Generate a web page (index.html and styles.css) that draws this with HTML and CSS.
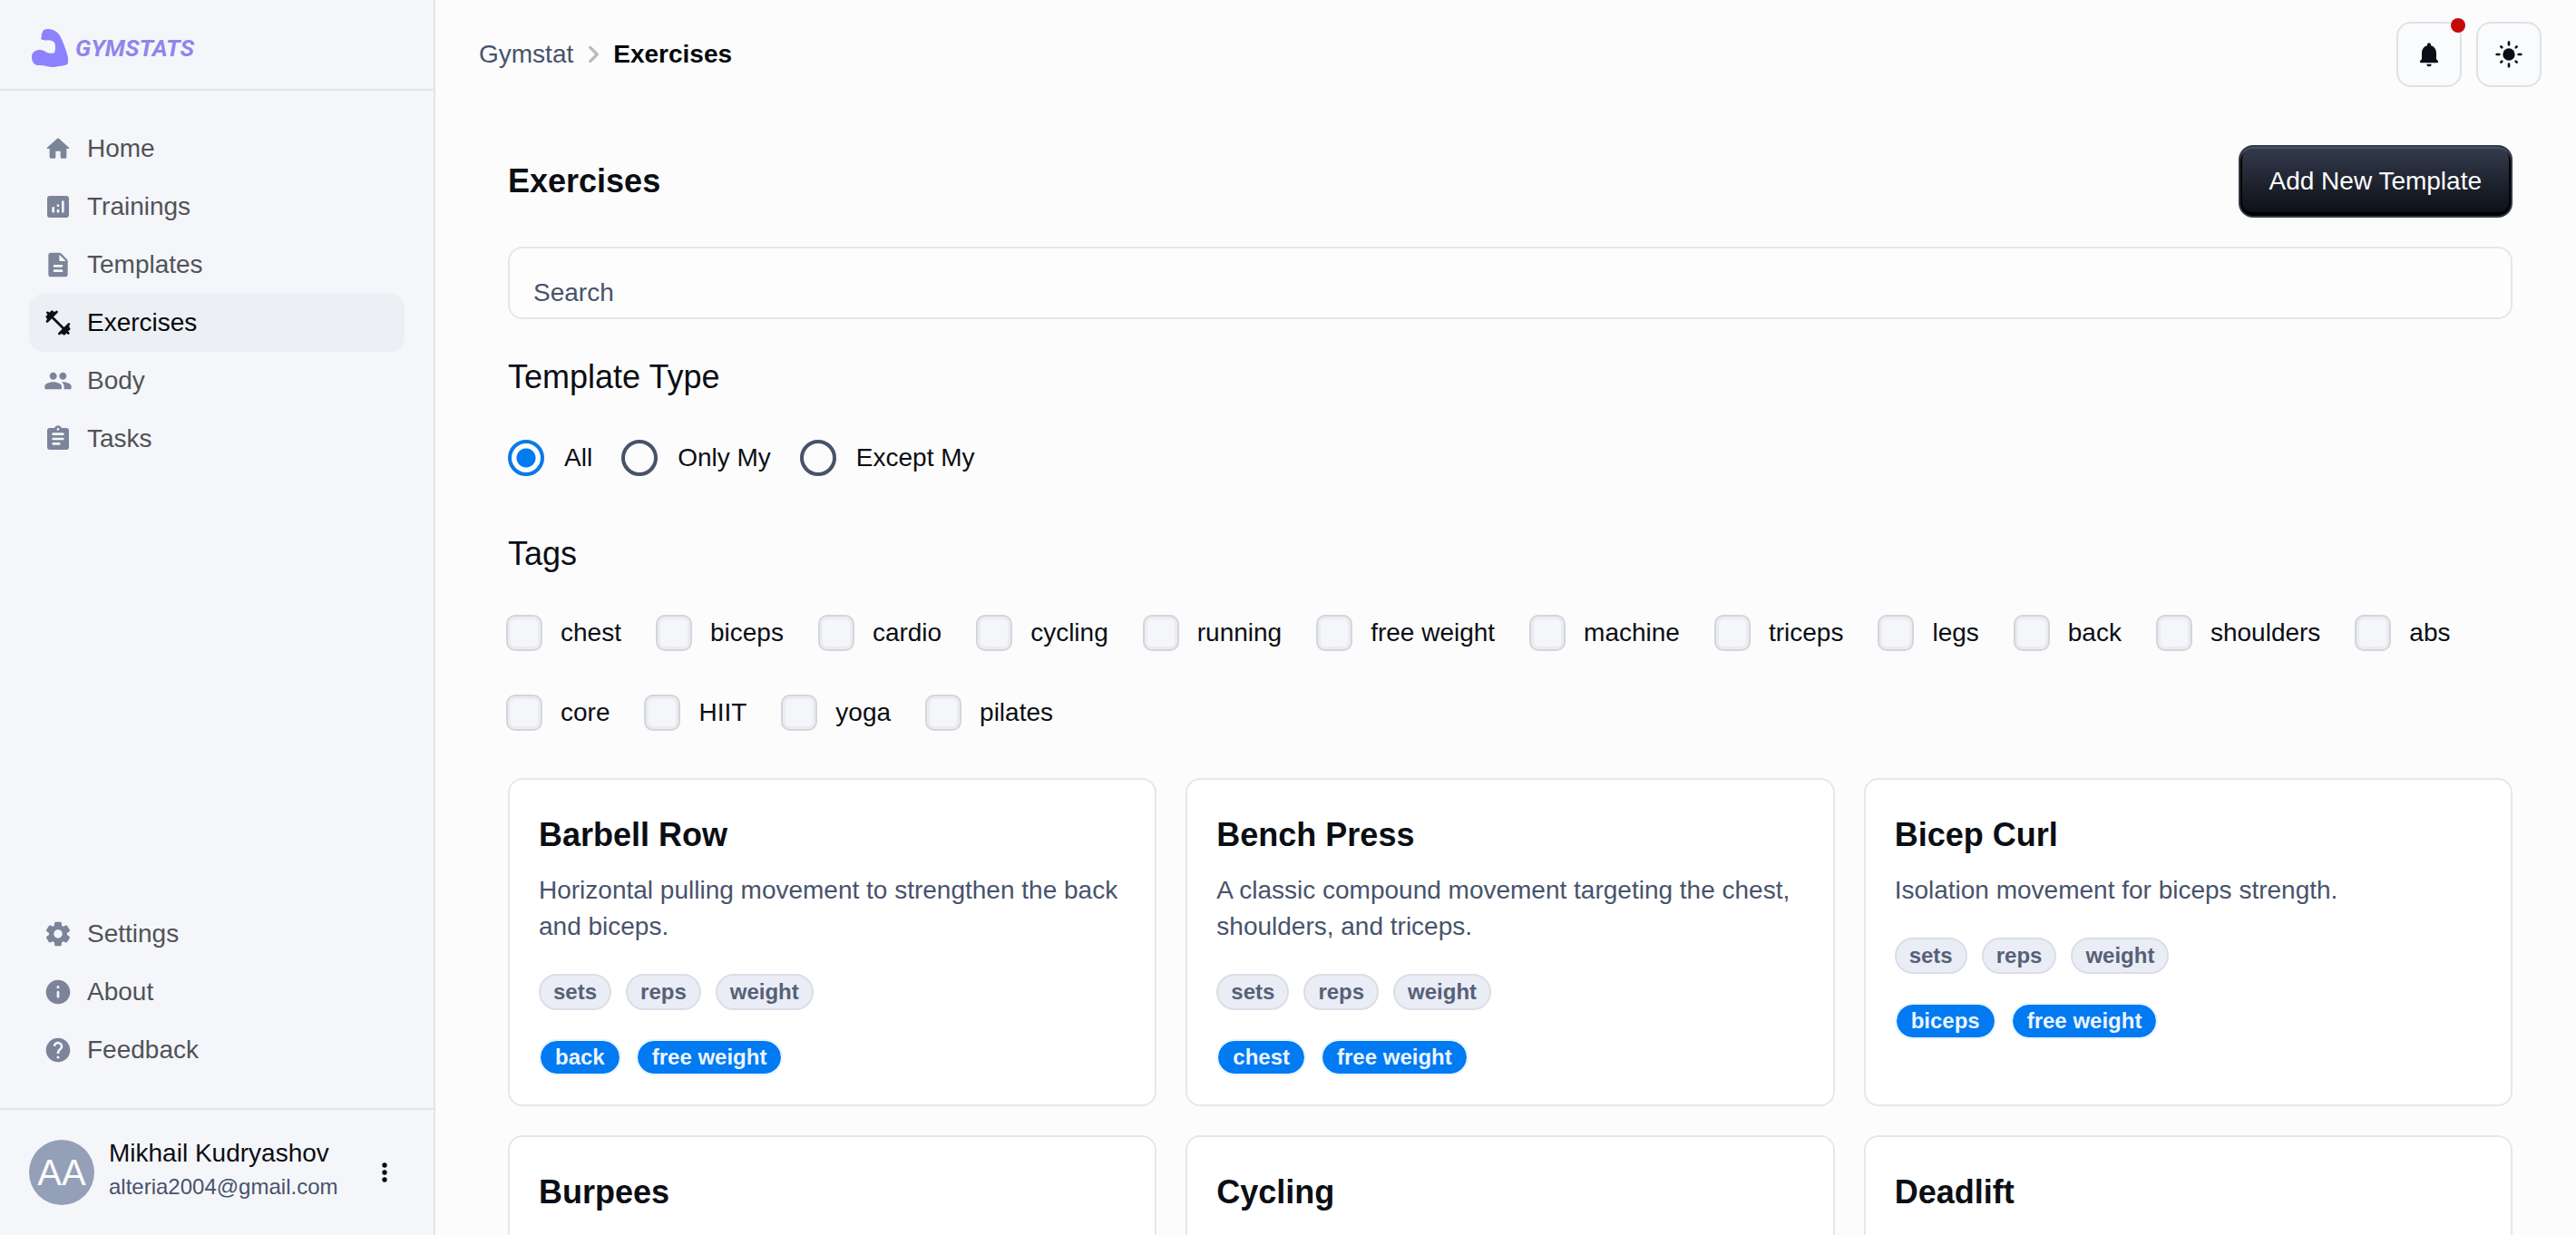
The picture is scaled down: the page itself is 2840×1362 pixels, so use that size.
FILE: index.html
```html
<!DOCTYPE html>
<html lang="en">
<head>
<meta charset="utf-8">
<title>Gymstat - Exercises</title>
<link rel="stylesheet" href="styles.css">
</head>
<body>
<div class="app">
  <aside class="sidebar">
    <a class="brand" href="#">
      <svg class="brand-mark" viewBox="0 0 120 126" aria-hidden="true"><path d="M52 0C42 0 36 5 35 12C31 17 31 23 34 25C28 29 31 37 38 36C46 40 50 35 56 37C64 38 72 40 76 47C79 56 79 68 75 79C67 82 56 80 49 77C41 70 33 68 24 69C8 71 0 80 0 92C0 107 7 118 20 120C36 121 44 121 52 124C64 127 78 126 90 123C100 122 112 120 118 116C122 110 121 98 117 84C112 65 104 43 93 22C85 8 70 0 52 0Z"/></svg>
      <span class="brand-name">GYMSTATS</span>
    </a>
    <nav class="nav">
      <div class="nav-group">
        <a class="nav-item" href="#"><svg class="icon" viewBox="0 0 24 24"><path d="M10 19v-5h4v5c0 .55.45 1 1 1h3c.55 0 1-.45 1-1v-7h1.7c.46 0 .68-.57.33-.87L12.67 3.6c-.38-.34-.96-.34-1.34 0l-8.36 7.53c-.34.3-.13.87.33.87H5v7c0 .55.45 1 1 1h3c.55 0 1-.45 1-1z"/></svg>Home</a>
        <a class="nav-item" href="#"><svg class="icon" viewBox="0 0 24 24"><path d="M19 3H5c-1.100 0-2 .9-2 2v14c0 1.100.9 2 2 2h14c1.100 0 2-.9 2-2V5c0-1.100-.9-2-2-2zM8 17c-.55 0-1-.45-1-1v-3c0-.55.45-1 1-1s1 .45 1 1v3c0 .55-.45 1-1 1zm4 0c-.55 0-1-.45-1-1v-1c0-.55.45-1 1-1s1 .45 1 1v1c0 .55-.45 1-1 1zm0-5c-.55 0-1-.45-1-1s.45-1 1-1 1 .45 1 1-.45 1-1 1zm4 5c-.55 0-1-.45-1-1V8c0-.55.45-1 1-1s1 .45 1 1v8c0 .55-.45 1-1 1z"/></svg>Trainings</a>
        <a class="nav-item" href="#"><svg class="icon" viewBox="0 0 24 24"><path d="M14.590 2.590c-.38-.38-.89-.59-1.420-.59H6c-1.100 0-2 .9-2 2v16c0 1.100.89 2 1.990 2H18c1.100 0 2-.9 2-2V8.830c0-.53-.21-1.040-.59-1.410l-4.820-4.830zM15 18H9c-.55 0-1-.45-1-1s.45-1 1-1h6c.55 0 1 .45 1 1s-.45 1-1 1zm0-4H9c-.55 0-1-.45-1-1s.45-1 1-1h6c.55 0 1 .45 1 1s-.45 1-1 1zm-2-6V3.500L18.500 9H14c-.55 0-1-.45-1-1z"/></svg>Templates</a>
        <a class="nav-item active" href="#" aria-current="page"><svg class="icon line" viewBox="0 0 24 24"><path d="M3.300 3.600L20.500 20.600M2.800 7L7 2.800M3.600 8.600L8.600 3.600M3 10.900L10.900 3M13 21L21 13M15.300 20.500L20.500 15.300M17 21.200L21.200 17"/></svg>Exercises</a>
        <a class="nav-item" href="#"><svg class="icon" viewBox="0 0 24 24"><path d="M16 11c1.660 0 2.990-1.340 2.990-3S17.660 5 16 5s-3 1.340-3 3 1.340 3 3 3zm-8 0c1.660 0 2.990-1.340 2.990-3S9.660 5 8 5 5 6.340 5 8s1.340 3 3 3zm0 2c-2.330 0-7 1.170-7 3.500V18c0 .55.45 1 1 1h12c.55 0 1-.45 1-1v-1.500c0-2.330-4.670-3.500-7-3.500zm8 0c-.29 0-.62.02-.97.05.02.01.03.03.04.04 1.140.83 1.930 1.940 1.930 3.410V18c0 .35-.07.69-.18 1H22c.55 0 1-.45 1-1v-1.500c0-2.330-4.670-3.500-7-3.500z"/></svg>Body</a>
        <a class="nav-item" href="#"><svg class="icon" viewBox="0 0 24 24"><path d="M19 3h-4.180C14.400 1.840 13.300 1 12 1s-2.400.84-2.820 2H5c-1.100 0-2 .9-2 2v14c0 1.100.9 2 2 2h14c1.100 0 2-.9 2-2V5c0-1.100-.9-2-2-2zm-7 0c.55 0 1 .45 1 1s-.45 1-1 1-1-.45-1-1 .45-1 1-1zm1 14H8c-.55 0-1-.45-1-1s.45-1 1-1h5c.55 0 1 .45 1 1s-.45 1-1 1zm3-4H8c-.55 0-1-.45-1-1s.45-1 1-1h8c.55 0 1 .45 1 1s-.45 1-1 1zm0-4H8c-.55 0-1-.45-1-1s.45-1 1-1h8c.55 0 1 .45 1 1s-.45 1-1 1z"/></svg>Tasks</a>
      </div>
      <div class="nav-group">
        <a class="nav-item" href="#"><svg class="icon" viewBox="0 0 24 24"><path d="M19.500 12c0-.23-.01-.45-.03-.68l1.860-1.410c.4-.3.51-.86.26-1.300l-1.870-3.230c-.25-.44-.79-.62-1.250-.42l-2.150.91c-.37-.26-.76-.49-1.170-.68l-.29-2.310c-.06-.5-.49-.88-.99-.88h-3.730c-.51 0-.94.38-1 .88l-.29 2.310c-.41.19-.8.42-1.170.68l-2.150-.91c-.46-.2-1-.02-1.250.42L2.410 8.620c-.25.44-.14.99.26 1.300l1.860 1.410c-.02.22-.03.44-.03.67s.01.45.03.68l-1.860 1.410c-.4.3-.51.86-.26 1.300l1.870 3.230c.25.44.79.62 1.250.42l2.150-.91c.37.26.76.49 1.170.68l.29 2.310c.06.5.49.88.99.88h3.730c.5 0 .93-.38.99-.88l.29-2.310c.41-.19.8-.42 1.170-.68l2.150.91c.46.2 1 .02 1.250-.42l1.870-3.230c.25-.44.14-.99-.26-1.300l-1.860-1.410c.03-.23.04-.45.04-.68zm-7.460 3.500c-1.930 0-3.500-1.570-3.500-3.500s1.570-3.500 3.500-3.500 3.500 1.570 3.500 3.500-1.570 3.500-3.500 3.500z"/></svg>Settings</a>
        <a class="nav-item" href="#"><svg class="icon" viewBox="0 0 24 24"><path d="M12 2C6.480 2 2 6.480 2 12s4.480 10 10 10 10-4.480 10-10S17.520 2 12 2zm0 15c-.55 0-1-.45-1-1v-4c0-.55.45-1 1-1s1 .45 1 1v4c0 .55-.45 1-1 1zm1-8h-2V7h2v2z"/></svg>About</a>
        <a class="nav-item" href="#"><svg class="icon" viewBox="0 0 24 24"><path d="M12 2C6.480 2 2 6.480 2 12s4.480 10 10 10 10-4.480 10-10S17.520 2 12 2zm1 17h-2v-2h2v2zm2.070-7.750l-.9.92c-.5.51-.86.97-1.040 1.690-.08.32-.13.68-.13 1.140h-2v-.5c0-.46.08-.9.22-1.310.2-.58.53-1.100.95-1.520l1.240-1.260c.46-.44.68-1.100.55-1.800-.13-.72-.69-1.330-1.390-1.530-1.110-.31-2.140.32-2.470 1.270-.12.37-.43.65-.82.65h-.3C8.400 9 8 8.440 8.160 7.880c.43-1.470 1.680-2.590 3.230-2.830 1.520-.24 2.970.55 3.870 1.800 1.180 1.630.83 3.380-.19 4.400z"/></svg>Feedback</a>
      </div>
    </nav>
    <div class="user">
      <span class="avatar">AA</span>
      <div class="user-info">
        <div class="user-name">Mikhail Kudryashov</div>
        <div class="user-mail">alteria2004@gmail.com</div>
      </div>
      <button class="user-menu" type="button" aria-label="Account menu"><svg class="icon" viewBox="0 0 24 24"><circle cx="12" cy="6" r="2"/><circle cx="12" cy="12" r="2"/><circle cx="12" cy="18" r="2"/></svg></button>
    </div>
  </aside>

  <main class="main">
    <header class="topbar">
      <nav class="crumbs" aria-label="Breadcrumb">
        <a class="crumb" href="#">Gymstat</a>
        <svg class="crumb-sep" viewBox="0 0 24 24"><path d="M9.310 6.710c-.39.39-.39 1.020 0 1.410L13.190 12l-3.880 3.880c-.39.39-.39 1.020 0 1.410.39.39 1.020.39 1.410 0l4.590-4.590c.39-.39.39-1.020 0-1.410L10.720 6.700c-.38-.38-1.020-.38-1.410.01z"/></svg>
        <span class="crumb current">Exercises</span>
      </nav>
      <div class="actions">
        <button class="icon-button" type="button" aria-label="Notifications"><svg class="icon" viewBox="0 0 24 24"><path d="M12 22c1.100 0 2-.9 2-2h-4c0 1.100.89 2 2 2zm6-6v-5c0-3.070-1.640-5.640-4.500-6.320V4c0-.83-.67-1.500-1.500-1.500s-1.500.67-1.500 1.500v.68C7.630 5.360 6 7.920 6 11v5l-1.290 1.290c-.63.63-.19 1.710.7 1.710h13.170c.89 0 1.340-1.080.71-1.710L18 16z"/></svg><span class="dot"></span></button>
        <button class="icon-button" type="button" aria-label="Colour mode"><svg class="icon sun" viewBox="0 0 24 24"><circle cx="12" cy="12" r="5"/><path d="M12 2v2M12 20v2M2 12h2M20 12h2M5.500 5.500l.7.7M17.800 17.800l.7.7M5.500 18.500l.7-.7M17.800 6.200l.7-.7"/></svg></button>
      </div>
    </header>

    <div class="content">
      <div class="page-head">
        <h1 class="heading bold">Exercises</h1>
        <button class="primary" type="button">Add New Template</button>
      </div>
      <input class="search" type="search" placeholder="Search" aria-label="Search">

      <section class="filter" aria-labelledby="type-title">
        <h2 class="heading" id="type-title">Template Type</h2>
        <div class="radios">
          <label class="option"><input class="radio" type="radio" name="type" checked>All</label>
          <label class="option"><input class="radio" type="radio" name="type">Only My</label>
          <label class="option"><input class="radio" type="radio" name="type">Except My</label>
        </div>
      </section>

      <section class="filter" aria-labelledby="tags-title">
        <h2 class="heading" id="tags-title">Tags</h2>
        <div class="checks">
          <label class="option"><input class="check" type="checkbox">chest</label>
          <label class="option"><input class="check" type="checkbox">biceps</label>
          <label class="option"><input class="check" type="checkbox">cardio</label>
          <label class="option"><input class="check" type="checkbox">cycling</label>
          <label class="option"><input class="check" type="checkbox">running</label>
          <label class="option"><input class="check" type="checkbox">free weight</label>
          <label class="option"><input class="check" type="checkbox">machine</label>
          <label class="option"><input class="check" type="checkbox">triceps</label>
          <label class="option"><input class="check" type="checkbox">legs</label>
          <label class="option"><input class="check" type="checkbox">back</label>
          <label class="option"><input class="check" type="checkbox">shoulders</label>
          <label class="option"><input class="check" type="checkbox">abs</label>
          <label class="option"><input class="check" type="checkbox">core</label>
          <label class="option"><input class="check" type="checkbox">HIIT</label>
          <label class="option"><input class="check" type="checkbox">yoga</label>
          <label class="option"><input class="check" type="checkbox">pilates</label>
        </div>
      </section>

      <div class="cards">
        <article class="card">
          <h3 class="card-title">Barbell Row</h3>
          <p class="card-text">Horizontal pulling movement to strengthen the back and biceps.</p>
          <div class="chips"><span class="chip">sets</span><span class="chip">reps</span><span class="chip">weight</span></div>
          <div class="chips"><span class="chip tag">back</span><span class="chip tag">free weight</span></div>
        </article>
        <article class="card">
          <h3 class="card-title">Bench Press</h3>
          <p class="card-text">A classic compound movement targeting the chest, shoulders, and triceps.</p>
          <div class="chips"><span class="chip">sets</span><span class="chip">reps</span><span class="chip">weight</span></div>
          <div class="chips"><span class="chip tag">chest</span><span class="chip tag">free weight</span></div>
        </article>
        <article class="card">
          <h3 class="card-title">Bicep Curl</h3>
          <p class="card-text">Isolation movement for biceps strength.</p>
          <div class="chips"><span class="chip">sets</span><span class="chip">reps</span><span class="chip">weight</span></div>
          <div class="chips"><span class="chip tag">biceps</span><span class="chip tag">free weight</span></div>
        </article>
        <article class="card"><h3 class="card-title">Burpees</h3></article>
        <article class="card"><h3 class="card-title">Cycling</h3></article>
        <article class="card"><h3 class="card-title">Deadlift</h3></article>
      </div>
    </div>
  </main>
</div>
</body>
</html>
```
FILE: styles.css
```css
* {
  box-sizing: border-box;
}

body {
  margin: 0;
  background: #fcfcfc;
  color: #0b0e14;
  font: 28px/40px "Liberation Sans", Arial, sans-serif;
}

a {
  color: inherit;
  text-decoration: none;
}

button,
input {
  margin: 0;
  font: inherit;
}

h1,
h2,
h3,
p {
  margin: 0;
}

.app {
  display: flex;
  height: 100vh;
}

.icon {
  width: 32px;
  height: 32px;
  flex: none;
  fill: currentColor;
}

/* Sidebar */
.sidebar {
  display: flex;
  flex-direction: column;
  flex: none;
  width: 480px;
  background: #f5f6fa;
  border-right: 2px solid #e1e3ea;
}

.brand {
  display: flex;
  align-items: center;
  gap: 8px;
  height: 100px;
  padding: 8px 35px 0;
  border-bottom: 2px solid #e1e3ea;
  color: #9085ec;
}

.brand-mark {
  width: 40px;
  height: 42px;
  fill: #8c82ff;
}

.brand-name {
  font: italic bold 26px/40px Roboto, "Liberation Sans", sans-serif;
}

.nav {
  display: flex;
  flex: 1;
  flex-direction: column;
  justify-content: space-between;
  padding: 32px;
}

.nav-item {
  display: flex;
  align-items: center;
  gap: 16px;
  height: 64px;
  padding: 0 16px;
  border-radius: 16px;
  color: #505357;
}

.nav-item .icon {
  color: #7b8499;
}

.nav-item.active {
  background: #eceff4;
  color: #05070a;
}

.nav-item.active .icon {
  color: #0b0e14;
}

.icon.line {
  fill: none;
  stroke: currentColor;
  stroke-width: 2;
  stroke-linecap: round;
}

.user {
  display: flex;
  align-items: center;
  gap: 16px;
  padding: 32px;
  border-top: 2px solid #e1e3ea;
}

.avatar {
  display: grid;
  place-items: center;
  width: 72px;
  height: 72px;
  border-radius: 50%;
  background: #94a0b8;
  color: #fcfcfc;
  font-size: 40px;
}

.user-info {
  flex: 1;
}

.user-name {
  line-height: 32px;
}

.user-mail {
  color: #47536b;
  font-size: 24px;
  line-height: 42px;
}

.user-menu {
  display: flex;
  padding: 6px;
  border: 0;
  background: none;
  color: #05070a;
}

/* Main area */
.main {
  flex: 1;
  min-width: 0;
  overflow-y: auto;
  scrollbar-width: none;
}

.topbar {
  display: flex;
  align-items: center;
  justify-content: space-between;
  padding: 24px 38px 0 48px;
}

.crumbs {
  display: flex;
  align-items: center;
  gap: 2px;
}

.crumb {
  color: #47536b;
}

.crumb.current {
  color: #05070a;
  font-weight: bold;
}

.crumb-sep {
  width: 40px;
  height: 40px;
  fill: #b9bbbf;
}

.actions {
  display: flex;
  gap: 16px;
}

.icon-button {
  position: relative;
  display: grid;
  place-items: center;
  width: 72px;
  height: 72px;
  padding: 0;
  border: 2px solid #dfe1e8;
  border-radius: 16px;
  background: #fafbfc;
  color: #0b0e14;
}

.sun {
  stroke: currentColor;
  stroke-width: 2;
  stroke-linecap: round;
}

.sun circle {
  stroke: none;
}

.dot {
  position: absolute;
  top: -6px;
  right: -6px;
  width: 16px;
  height: 16px;
  border-radius: 50%;
  background: #c50a0a;
}

.content {
  padding: 64px 70px 32px 80px;
}

.page-head {
  display: flex;
  align-items: center;
  justify-content: space-between;
  margin-bottom: 32px;
}

.heading {
  font-size: 36px;
  font-weight: normal;
  line-height: 56px;
}

.heading.bold {
  font-weight: bold;
}

.primary {
  height: 80px;
  padding: 0 32px;
  border: 2px solid #333a48;
  border-radius: 16px;
  background: linear-gradient(#333b4d, #0b0e14);
  box-shadow: inset 0 2px 0 #47536b, inset 0 -4px 0 #000, inset 2px 0 0 #000, inset -2px 0 0 #000;
  color: #fff;
}

.search {
  display: block;
  width: 100%;
  height: 80px;
  padding: 22px 26px 0;
  border: 2px solid #e5e6eb;
  border-radius: 16px;
  outline: 0;
  appearance: none;
  background: #fdfdfe;
  color: #0b0e14;
}

.search::placeholder {
  color: #47536b;
  opacity: 1;
}

.filter {
  margin-top: 36px;
}

.radios,
.checks {
  display: flex;
  flex-wrap: wrap;
}

.radios {
  gap: 32px;
  padding: 41px 0 22px;
}

.checks {
  gap: 48px 38px;
  margin-left: -2px;
  padding: 39px 0 52px;
}

.option {
  display: flex;
  align-items: center;
  gap: 20px;
}

.radios .option {
  gap: 22px;
}

.radio,
.check {
  width: 40px;
  height: 40px;
  flex: none;
  appearance: none;
}

.radio {
  border: 4px solid #47536b;
  border-radius: 50%;
}

.radio:checked {
  border-color: #0a7aea;
  background: radial-gradient(circle, #027af2 10px, transparent 11px);
}

.check {
  border: 2px solid #d3d5dd;
  border-radius: 10px;
  background: #f5f6fa;
  box-shadow: inset 0 0 0 3px #ebecf1;
}

.cards {
  display: grid;
  grid-template-columns: repeat(3, 1fr);
  gap: 32px;
}

.card {
  padding: 32px;
  border: 2px solid #e6e7ea;
  border-radius: 16px;
  background: #fff;
}

.card-title {
  margin-bottom: 12px;
  font-size: 36px;
  line-height: 58px;
}

.card-text {
  color: #47536b;
}

.chips {
  display: flex;
  gap: 16px;
  margin-top: 32px;
}

.chip {
  height: 40px;
  padding: 0 14px;
  border: 2px solid #dadee7;
  border-radius: 20px;
  background: #eaedf5;
  color: #566079;
  font-size: 24px;
  font-weight: bold;
  line-height: 36px;
}

.chip.tag {
  padding: 0 16px;
  border-color: #e8f5ff;
  background: #027af2;
  background-clip: padding-box;
  color: #ebf5ff;
}
```
